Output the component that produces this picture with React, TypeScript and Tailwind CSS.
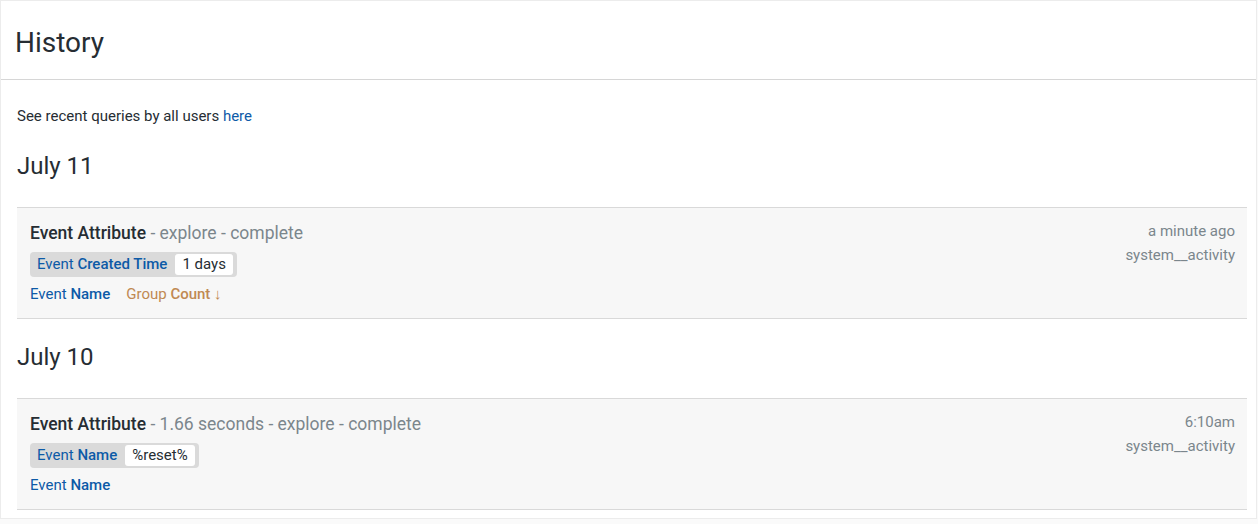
import React from "react";

type Filter = { view: string; field: string; value: string };
type Field = { view: string; field: string; sort?: boolean };

type Query = {
  model: string;
  meta: string;
  filters: Filter[];
  fields: Field[];
  when: string;
  conn: string;
};

const groups: { day: string; queries: Query[] }[] = [
  {
    day: "July 11",
    queries: [
      {
        model: "Event Attribute",
        meta: " - explore - complete",
        filters: [{ view: "Event", field: "Created Time", value: "1 days" }],
        fields: [
          { view: "Event", field: "Name" },
          { view: "Group", field: "Count", sort: true },
        ],
        when: "a minute ago",
        conn: "system__activity",
      },
    ],
  },
  {
    day: "July 10",
    queries: [
      {
        model: "Event Attribute",
        meta: " - 1.66 seconds - explore - complete",
        filters: [{ view: "Event", field: "Name", value: "%reset%" }],
        fields: [{ view: "Event", field: "Name" }],
        when: "6:10am",
        conn: "system__activity",
      },
    ],
  },
];

function QueryRow({ q }: { q: Query }) {
  return (
    <div className="flex justify-between bg-[#f7f7f7] border-y border-[#d9d9d9] pl-[13px] pr-[12px] pt-[14px] pb-[14px]">
      <div>
        <div className="text-[17.5px] leading-[22px]">
          <span className="font-medium text-[#262d33]">{q.model}</span>
          <span className="text-[#7b868c]">{q.meta}</span>
        </div>
        {/* filtros */}
        <div className="flex mt-[8px]">
          {q.filters.map((f, i) => (
            <div key={i} className="flex items-center bg-[#dadada] rounded-[4px] pl-[7px] pr-[4px] py-[2px] text-[15px] leading-[21px]">
              <span className="text-[#0d5aa7]">
                {f.view} <span className="font-medium">{f.field}</span>
              </span>
              <span className="ml-[8px] bg-white rounded-[3px] px-[7px] text-[#262d33]">{f.value}</span>
            </div>
          ))}
        </div>
        <div className="flex gap-[16px] mt-[7px] text-[15px] leading-[20px]">
          {q.fields.map((f, i) => (
            <span key={i} className={f.sort ? "text-[#c08952]" : "text-[#0d5aa7]"}>
              {f.view} <span className="font-medium">{f.field}</span>
              {f.sort && " ↓"}
            </span>
          ))}
        </div>
      </div>
      <div className="text-right text-[15px] leading-[24px] text-[#7b868c] -mt-[3px]">
        <div>{q.when}</div>
        <div>{q.conn}</div>
      </div>
    </div>
  );
}

export default function App() {
  return (
    <div className="min-h-screen bg-[#fafafa] font-['Roboto',sans-serif]">
      <div className="w-[1257px] bg-white border border-[#ececec] pb-[8px]">
        <div className="h-[79px] border-b border-[#d6d6d6] flex items-center px-[14px]">
          <h1 className="text-[28px] font-normal text-[#262d33] pt-[5px]">History</h1>
        </div>

        <div className="pl-[16px] pr-[9px]">
          <p className="mt-[26px] text-[15px] text-[#262d33] leading-[20px]">
            See recent queries by all users <a className="text-[#0d5aa7]">here</a>
          </p>

          {groups.map((g, idx) => (
            <section key={g.day}>
              <h2
                className={`text-[24px] font-normal text-[#262d33] leading-[32px] mb-[25px] ${idx === 0 ? "mt-[24px]" : "mt-[22px]"}`}
              >
                {g.day}
              </h2>
              {g.queries.map((q, i) => (
                <QueryRow key={i} q={q} />
              ))}
            </section>
          ))}
        </div>
      </div>
    </div>
  );
}
